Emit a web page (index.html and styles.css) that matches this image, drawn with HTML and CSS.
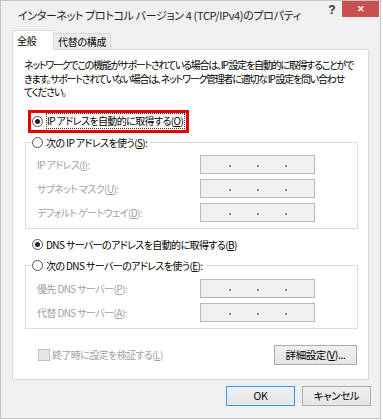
FILE: index.html
```html
<!DOCTYPE html>
<html lang="ja">
<head>
    <meta charset="UTF-8">
    <meta name="viewport" content="width=device-width, initial-scale=1.0">
    <title>インターネット プロトコル バージョン 4 (TCP/IPv4)のプロパティ</title>
    <link rel="stylesheet" href="styles.css">
</head>
<body>
    <div class="window">
        <div class="titlebar">
            <span class="title">インターネット プロトコル バージョン 4 (TCP/IPv4)のプロパティ</span>
            <span class="help">?</span>
            <span class="close">&#x2715;</span>
        </div>

        <div class="client">
            <div class="tabs">
                <div class="tab active">全般</div>
                <div class="tab">代替の構成</div>
            </div>

            <div class="panel">
                <p class="desc">ネットワークでこの機能がサポートされている場合は、IP 設定を自動的に取得することがで<br>きます。サポートされていない場合は、ネットワーク管理者に適切な IP 設定を問い合わせ<br>てください。</p>

                <div class="highlight">
                    <label class="option">
                        <span class="radio checked"></span>
                        <span class="focus">IP アドレスを自動的に取得する(<u>O</u>)</span>
                    </label>
                </div>

                <fieldset class="group">
                    <legend class="option">
                        <span class="radio"></span>
                        <span>次の IP アドレスを使う(<u>S</u>):</span>
                    </legend>
                    <div class="rows">
                        <div class="row">
                            <span class="label">IP アドレス(<u>I</u>):</span>
                            <div class="ipbox"><i></i><i></i><i></i></div>
                        </div>
                        <div class="row">
                            <span class="label">サブネット マスク(<u>U</u>):</span>
                            <div class="ipbox"><i></i><i></i><i></i></div>
                        </div>
                        <div class="row">
                            <span class="label">デフォルト ゲートウェイ(<u>D</u>):</span>
                            <div class="ipbox"><i></i><i></i><i></i></div>
                        </div>
                    </div>
                </fieldset>

                <label class="option dns-auto">
                    <span class="radio checked"></span>
                    <span>DNS サーバーのアドレスを自動的に取得する(<u>B</u>)</span>
                </label>

                <fieldset class="group dns">
                    <legend class="option">
                        <span class="radio"></span>
                        <span>次の DNS サーバーのアドレスを使う(<u>E</u>):</span>
                    </legend>
                    <div class="rows">
                        <div class="row">
                            <span class="label">優先 DNS サーバー(<u>P</u>):</span>
                            <div class="ipbox"><i></i><i></i><i></i></div>
                        </div>
                        <div class="row">
                            <span class="label">代替 DNS サーバー(<u>A</u>):</span>
                            <div class="ipbox"><i></i><i></i><i></i></div>
                        </div>
                    </div>
                </fieldset>

                <div class="panel-footer">
                    <label class="check-option">
                        <span class="checkbox"></span>
                        <span>終了時に設定を検証する(<u>L</u>)</span>
                    </label>
                    <button class="btn advanced">詳細設定(<u>V</u>)...</button>
                </div>
            </div>

            <div class="actions">
                <button class="btn default">OK</button>
                <button class="btn">キャンセル</button>
            </div>
        </div>
    </div>
</body>
</html>
```

FILE: styles.css
```css
body {
    margin: 0;
    background: #ffffff;
    font-family: "Noto Sans CJK JP", "Liberation Sans", sans-serif;
    font-size: 10px;
    letter-spacing: -0.6px;
    font-feature-settings: "palt";
    color: #000;
}

.window {
    width: 379px;
    height: 417px;
    border: 1px solid #c4c4c4;
    background: #f0f0f0;
    display: flex;
    flex-direction: column;
}

/* title bar */
.titlebar {
    height: 28px;
    display: flex;
    align-items: flex-start;
}

.title {
    margin: 6px 0 0 17px;
    line-height: 16px;
    font-size: 11px;
    letter-spacing: -0.35px;
    color: #222;
    flex: 1;
    white-space: nowrap;
    overflow: hidden;
}

.help {
    margin: 2px 7px 0 0;
    font-family: "Liberation Sans", sans-serif;
    font-weight: bold;
    font-size: 12px;
    line-height: 14px;
    color: #333;
}

.close {
    width: 37px;
    height: 16px;
    margin-right: 1px;
    background: #c75050;
    color: #fff;
    font-size: 9px;
    font-weight: bold;
    line-height: 16px;
    text-align: center;
}

.client {
    padding: 0 11px;
    display: flex;
    flex-direction: column;
}

/* tabs */
.tabs {
    display: flex;
    align-items: flex-end;
    height: 20px;
}

.tab {
    height: 15px;
    padding: 0 4px;
    border: 1px solid #d9d9d9;
    border-bottom: none;
    background: #ececec;
    line-height: 15px;
    white-space: nowrap;
    letter-spacing: -0.3px;
}

.tab.active {
    height: 19px;
    width: 32px;
    padding: 0 4px;
    background: #fff;
    line-height: 20px;
    margin-bottom: -1px;
    position: relative;
    z-index: 1;
}

.tab + .tab {
    border-left: none;
}

/* panel */
.panel {
    background: #fff;
    border: 1px solid #d9d9d9;
    padding: 8px 10px 14px 11px;
    display: flex;
    flex-direction: column;
}

.desc {
    margin: 0;
    line-height: 13.5px;
    letter-spacing: -1.25px;
    white-space: nowrap;
}

.highlight {
    margin: 11px 0 0 4px;
    align-self: flex-start;
    height: 17px;
    padding-right: 1px;
    border: 3px solid #e60000;
    display: flex;
    align-items: center;
}

.option {
    display: flex;
    align-items: center;
    gap: 3px;
    line-height: 16px;
    white-space: nowrap;
}

.highlight .option {
    padding-left: 1px;
}

.focus {
    border: 1px dotted #333;
    padding: 0 1px 0 0;
    line-height: 14px;
}

.radio {
    width: 9px;
    height: 9px;
    border: 1px solid #555;
    border-radius: 50%;
    background: #fff;
    display: inline-flex;
    align-items: center;
    justify-content: center;
    flex: none;
}

.radio.checked::after {
    content: "";
    width: 5px;
    height: 5px;
    border-radius: 50%;
    background: #222;
}

/* group boxes */
.group {
    margin: 1px 0 0 1px;
    padding: 0 10px 6px 6px;
    border: 1px solid #dcdcdc;
    min-width: 0;
}

.group legend {
    padding: 0 3px 0 0;
    height: 18px;
}

.rows {
    margin-top: 3px;
    display: flex;
    flex-direction: column;
    gap: 5px;
}

.row {
    display: flex;
    align-items: center;
    padding-left: 5px;
    height: 19px;
}

.label {
    width: 163px;
    color: #a0a0a0;
    white-space: nowrap;
}

.ipbox {
    width: 115px;
    height: 19px;
    box-sizing: border-box;
    border: 1px solid #b9b9b9;
    background: #f0f0f0;
    display: flex;
    justify-content: space-between;
    align-items: flex-end;
    padding: 0 27px 0 28px;
}

.ipbox i {
    width: 2px;
    height: 2px;
    margin-bottom: 6px;
    background: #9a8a70;
}

.dns-auto {
    margin: 8px 0 0 8px;
    height: 16px;
}

.group.dns {
    margin-top: 4px;
}

.group.dns .rows {
    margin-top: 4px;
}

/* footer in panel */
.panel-footer {
    margin-top: 16px;
    display: flex;
    align-items: center;
    justify-content: space-between;
}

.check-option {
    margin-left: 14px;
    display: flex;
    align-items: center;
    gap: 2px;
    color: #a0a0a0;
}

.checkbox {
    width: 10px;
    height: 10px;
    border: 1px solid #c2c2c2;
    background: #e6e6e6;
}

.btn {
    height: 20px;
    border: 1px solid #acacac;
    background: linear-gradient(#f0f0f0, #e5e5e5);
    font-family: inherit;
    font-size: 10.5px;
    letter-spacing: -0.4px;
    font-feature-settings: "palt";
    color: #000;
    padding: 0;
    line-height: 18px;
}

.advanced {
    width: 83px;
    margin-right: 1px;
}

/* dialog buttons */
.actions {
    margin-top: 6px;
    display: flex;
    justify-content: flex-end;
    gap: 7px;
    margin-right: -2px;
}

.actions .btn {
    width: 69px;
}

.btn.default {
    border-color: #3399ff;
}
```
